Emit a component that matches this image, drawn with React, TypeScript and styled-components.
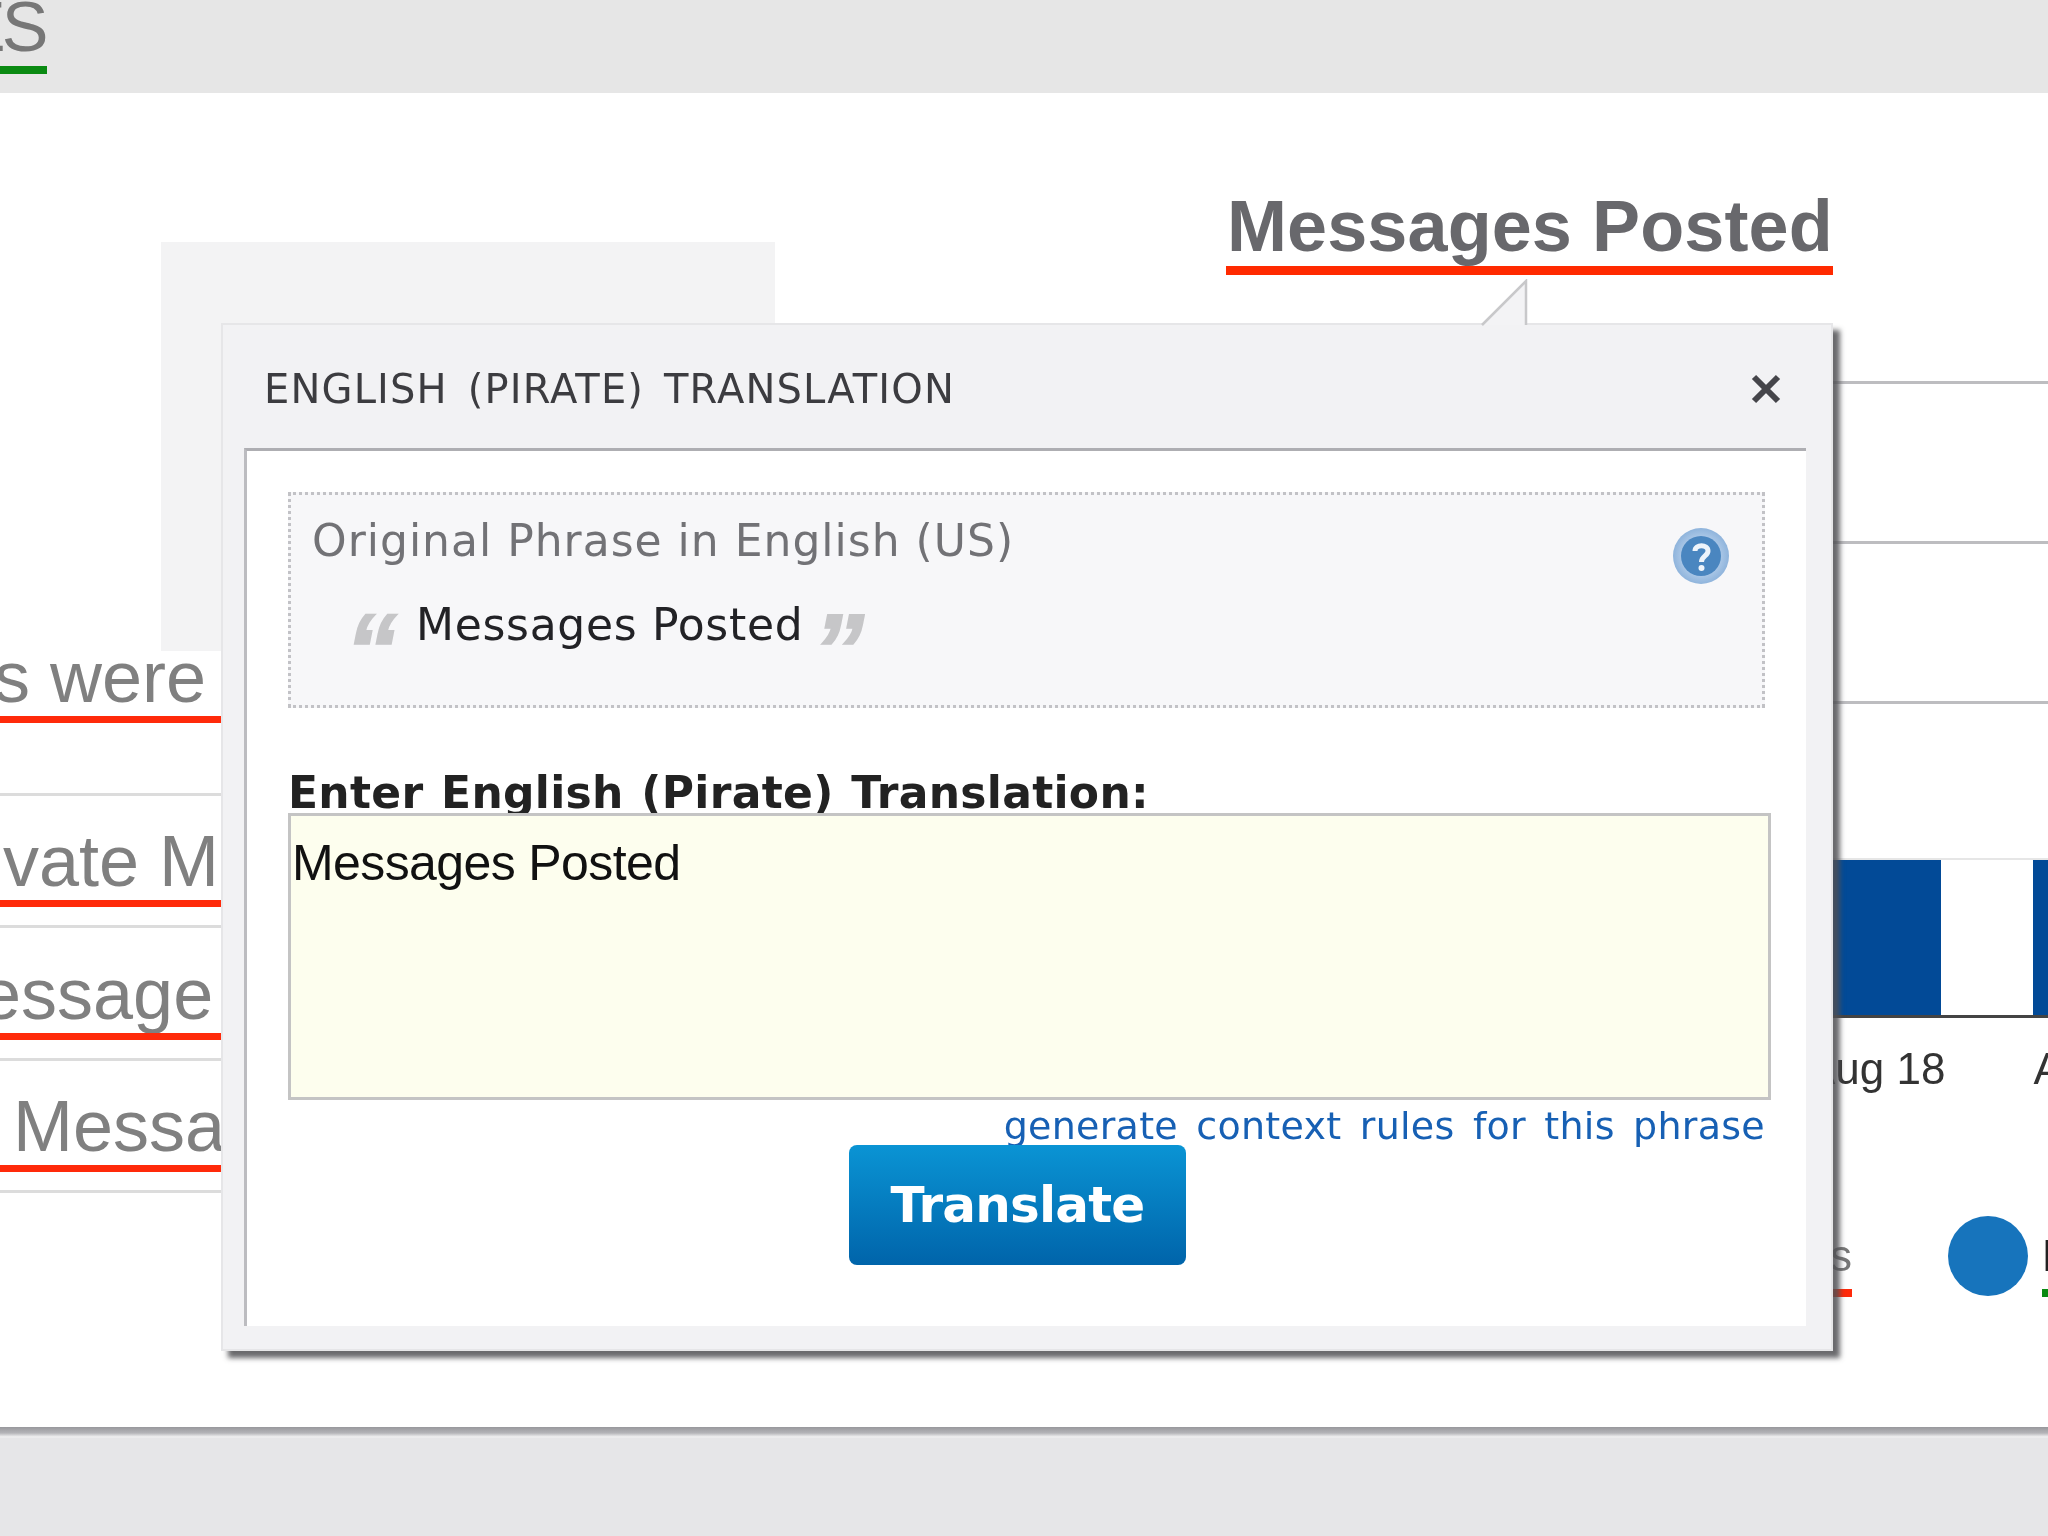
import * as React from 'react';
import styled, { createGlobalStyle } from 'styled-components';

const GlobalStyle = createGlobalStyle`
  html, body {
    margin: 0;
    padding: 0;
    background: #fff;
  }
  * {
    box-sizing: border-box;
  }
`;

const Page = styled.div`
  position: relative;
  width: 2048px;
  height: 1536px;
  overflow: hidden;
  display: flex;
  flex-direction: column;
  background: #fff;
  font-family: 'Liberation Sans', Arial, sans-serif;
  filter: blur(0.7px);
`;

const TopBar = styled.div`
  height: 93px;
  flex: none;
  background: #e6e6e6;
  overflow: hidden;
`;

const TabRule = styled.div`
  width: 47px;
  height: 74px;
  overflow: hidden;
  border-bottom: 8px solid #0a8a12;
`;

const TabLabel = styled.div`
  margin-left: -41px;
  color: #777;
  font-size: 70px;
  line-height: 54px;
  letter-spacing: -4px;
`;

const Main = styled.div`
  flex: 1;
  display: grid;
  grid-template-columns: 1226px 822px;
  min-height: 0;
`;

const LeftColumn = styled.div`
  display: flex;
  flex-direction: column;
`;

const GreyPanel = styled.div`
  width: 614px;
  height: 409px;
  margin: 149px 0 0 161px;
  background: #f3f3f4;
  flex: none;
`;

const StatRow = styled.div<{ $height: number; $line: boolean }>`
  height: ${p => p.$height}px;
  flex: none;
  width: 221px;
  display: flex;
  flex-direction: column;
  justify-content: flex-end;
  border-top: ${p => (p.$line ? '3px solid #dcdcdc' : 'none')};
`;

const StatText = styled.div<{ $indent: number }>`
  flex: none;
  margin-left: ${p => p.$indent}px;
  color: #808080;
  font-size: 72px;
  line-height: 78px;
  height: 78px;
  white-space: nowrap;
`;

const RedRule = styled.div<{ $after: number }>`
  width: 221px;
  height: 7px;
  flex: none;
  background: #ff2a0a;
  margin-bottom: ${p => p.$after}px;
`;

const RightColumn = styled.div`
  display: flex;
  flex-direction: column;
`;

const Heading = styled.div`
  align-self: flex-start;
  margin-top: 93px;
  height: 89px;
  padding: 0 0 0 1px;
  border-bottom: 9px solid #ff2a00;
  color: #68686c;
  font-size: 72px;
  font-weight: 700;
  line-height: 80px;
  letter-spacing: 0.1px;
  white-space: nowrap;
`;

const Chart = styled.div`
  margin-top: 106px;
  display: flex;
  flex-direction: column;
`;

const GridRow = styled.div`
  height: 160px;
  border-top: 3px solid #bdbdc0;
`;

const BarRow = styled.div`
  height: 160px;
  margin-top: -3px;
  padding-left: 607px;
  border-top: 2px solid #e6e6e6;
  border-bottom: 3px solid #444;
  display: flex;
  gap: 92px;
`;

const Bar = styled.div`
  width: 108px;
  flex: none;
  background: #024a97;
`;

const AxisRow = styled.div`
  height: 70px;
  padding: 26px 0 0 580px;
  display: flex;
  gap: 88px;
  color: #333;
  font-size: 44px;
  line-height: 50px;
  white-space: nowrap;
`;

const LegendRow = styled.div`
  margin-top: 141px;
  padding-left: 604px;
  display: flex;
  align-items: flex-end;
`;

const LegendText = styled.div<{ $rule: string; $color: string }>`
  flex: none;
  height: 68px;
  border-bottom: 8px solid ${p => p.$rule};
  color: ${p => p.$color};
  font-size: 44px;
  line-height: 54px;
  white-space: nowrap;
`;

const LegendDot = styled.div`
  width: 80px;
  height: 80px;
  flex: none;
  margin: -13px 14px 0 96px;
  align-self: flex-start;
  border-radius: 50%;
  background: #1774bc;
`;

const Footer = styled.div`
  height: 109px;
  flex: none;
  background: linear-gradient(#98989c 0, #b4b4b8 6px, #f2f2f3 10px, #e6e6e8 11px);
`;

const Modal = styled.div`
  position: absolute;
  left: 221px;
  top: 323px;
  width: 1612px;
  height: 1028px;
  display: flex;
  flex-direction: column;
  padding: 0 25px 23px 21px;
  background: #f2f2f4;
  border: 2px solid #e6e6e8;
  box-shadow: 7px 7px 5px rgba(80, 80, 84, 0.85);
`;

const Tail = styled.svg`
  position: absolute;
  left: 1257px;
  top: -46px;
  width: 50px;
  height: 50px;
`;

const ModalHeader = styled.div`
  height: 123px;
  flex: none;
  display: flex;
  align-items: center;
  justify-content: space-between;
  padding: 4px 24px 0 20px;
`;

const ModalTitle = styled.div`
  color: #3c3c40;
  font-family: 'DejaVu Sans', sans-serif;
  font-size: 40px;
  letter-spacing: 1.15px;
  word-spacing: 6px;
  white-space: nowrap;
`;

const CloseButton = styled.svg`
  width: 32px;
  height: 30px;
  flex: none;
`;

const ModalBody = styled.div`
  flex: 1;
  min-height: 0;
  display: flex;
  flex-direction: column;
  padding: 41px 33px 0 41px;
  background: #fff;
  border-top: 3px solid #aeaeb2;
  border-left: 3px solid #bcbcc0;
`;

const PhraseBox = styled.div`
  position: relative;
  height: 216px;
  flex: none;
  width: 1477px;
  padding: 16px 21px;
  background: #f7f7f9;
  border: 3px dotted #c2c2c6;
`;

const PhraseLabel = styled.div`
  color: #727276;
  font-family: 'DejaVu Sans', sans-serif;
  font-size: 44px;
  line-height: 60px;
  letter-spacing: 1px;
  white-space: nowrap;
`;

const PhraseText = styled.div`
  display: flex;
  align-items: center;
  gap: 18px;
  margin: 24px 0 0 33px;
  color: #222226;
  font-family: 'DejaVu Sans', sans-serif;
  font-size: 44px;
  line-height: 60px;
  letter-spacing: 0.7px;
  white-space: nowrap;
`;

const QuoteMark = styled.span<{ $before: number; $after: number }>`
  width: 46px;
  height: 36px;
  margin: 0 ${p => p.$after}px 0 ${p => p.$before}px;
  color: #c6c6c8;
  -webkit-text-stroke: 1.5px #c6c6c8;
  font-family: 'Liberation Sans', sans-serif;
  font-size: 104px;
  font-style: italic;
  font-weight: 700;
  line-height: 86px;
  letter-spacing: 0;
`;

const HelpIcon = styled.svg`
  position: absolute;
  right: 32px;
  top: 32px;
  width: 58px;
  height: 58px;
`;

const FieldLabel = styled.div`
  height: 65px;
  margin-top: 40px;
  flex: none;
  overflow: hidden;
  color: #222;
  font-family: 'DejaVu Sans', sans-serif;
  font-size: 44px;
  font-weight: 700;
  line-height: 90px;
  letter-spacing: 0.3px;
  word-spacing: 2px;
  white-space: nowrap;
`;

const TranslationField = styled.div`
  width: 1483px;
  height: 287px;
  flex: none;
  padding: 16px 1px;
  background: #fdfeee;
  border: 3px solid #c4c4c4;
  color: #111;
  font-size: 50px;
  line-height: 62px;
  letter-spacing: -0.6px;
`;

const ContextLink = styled.a`
  align-self: flex-end;
  height: 45px;
  margin-right: 8px;
  color: #1760b4;
  flex: none;
  font-family: 'DejaVu Sans', sans-serif;
  font-size: 38px;
  line-height: 52px;
  letter-spacing: 0.27px;
  word-spacing: 6px;
  white-space: nowrap;
`;

const TranslateButton = styled.button`
  width: 337px;
  height: 120px;
  margin-left: 561px;
  flex: none;
  border: none;
  border-radius: 8px;
  background: linear-gradient(#0a94d4, #0064aa);
  color: #fff;
  font-family: 'DejaVu Sans', sans-serif;
  font-size: 50px;
  font-weight: 700;
  letter-spacing: -0.8px;
`;

export default function App() {
  return (
    <Page>
      <GlobalStyle />
      <TopBar>
        <TabRule>
          <TabLabel>ES</TabLabel>
        </TabRule>
      </TopBar>
      <Main>
        <LeftColumn>
          <GreyPanel />
          <StatRow $height={65} $line={false}>
            <StatText $indent={-6}>s were</StatText>
          </StatRow>
          <RedRule $after={70} />
          <StatRow $height={107} $line>
            <StatText $indent={3}>vate M</StatText>
          </StatRow>
          <RedRule $after={18} />
          <StatRow $height={108} $line>
            <StatText $indent={-19}>essage</StatText>
          </StatRow>
          <RedRule $after={18} />
          <StatRow $height={107} $line>
            <StatText $indent={13}>Messa</StatText>
          </StatRow>
          <RedRule $after={18} />
          <StatRow $height={3} $line />
        </LeftColumn>
        <RightColumn>
          <Heading>Messages Posted</Heading>
          <Chart>
            <GridRow />
            <GridRow />
            <GridRow />
            <BarRow>
              <Bar />
              <Bar />
            </BarRow>
            <AxisRow>
              <span>Aug 18</span>
              <span>A</span>
            </AxisRow>
            <LegendRow>
              <LegendText $rule="#ff2a0a" $color="#777">s</LegendText>
              <LegendDot />
              <LegendText $rule="#0a8a12" $color="#222">M</LegendText>
            </LegendRow>
          </Chart>
        </RightColumn>
      </Main>
      <Footer />
      <Modal>
        <Tail viewBox="0 0 50 50">
          <path d="M2 46 L46 2 L46 46 Z" fill="#f3f3f5" />
          <path d="M2 46 L46 2 L46 46" fill="none" stroke="#c8c8ca" strokeWidth="2.5" />
        </Tail>
        <ModalHeader>
          <ModalTitle>ENGLISH (PIRATE) TRANSLATION</ModalTitle>
          <CloseButton viewBox="0 0 32 30">
            <path d="M4 3 L28 27 M28 3 L4 27" stroke="#45454a" strokeWidth="6" />
          </CloseButton>
        </ModalHeader>
        <ModalBody>
          <PhraseBox>
            <PhraseLabel>Original Phrase in English (US)</PhraseLabel>
            <PhraseText>
              <QuoteMark $before={0} $after={7}>“</QuoteMark>
              Messages Posted
              <QuoteMark $before={-9} $after={0}>”</QuoteMark>
            </PhraseText>
            <HelpIcon viewBox="0 0 58 58">
              <defs>
                <radialGradient id="helpRing" cx="50%" cy="50%" r="50%">
                  <stop offset="70%" stopColor="#a9c6e6" />
                  <stop offset="100%" stopColor="#8fb4dc" />
                </radialGradient>
              </defs>
              <circle cx="29" cy="29" r="28" fill="url(#helpRing)" />
              <circle cx="29" cy="29" r="20" fill="#4a86c0" />
              <path
                d="M23 24 C23 17 36 17 36 24 C36 29 29.5 29 29.5 35"
                fill="none"
                stroke="#eef4fb"
                strokeWidth="5"
              />
              <circle cx="29.5" cy="41" r="3" fill="#eef4fb" />
            </HelpIcon>
          </PhraseBox>
          <FieldLabel>Enter English (Pirate) Translation:</FieldLabel>
          <TranslationField>Messages Posted</TranslationField>
          <ContextLink>generate context rules for this phrase</ContextLink>
          <TranslateButton>Translate</TranslateButton>
        </ModalBody>
      </Modal>
    </Page>
  );
}
